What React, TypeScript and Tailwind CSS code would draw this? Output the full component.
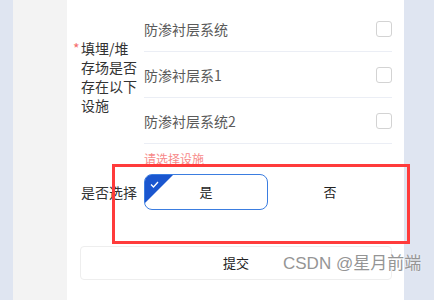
import React from "react";

const font = { fontFamily: '"Noto Sans CJK SC", "Noto Sans", sans-serif' };

function Row({ text }: { text: string }) {
  return (
    <div className="flex h-[46px] items-center justify-between border-b border-[#ebeef5]">
      <span className="pt-[2px] text-[14px] text-[#5a5a5a]">{text}</span>
      <span className="h-[16px] w-[16px] rounded-[3px] border border-[#d3d3d3] bg-white" />
    </div>
  );
}

export default function App() {
  return (
    <div className="relative flex h-[300px] w-[434px] overflow-hidden" style={font}>
      <div className="w-[13px] bg-[#dfe5f1]" />
      <div className="w-[54px] bg-[#f3f3f3]" />
      <div className="flex w-[337px] flex-col bg-white pl-[6px] pr-[12px] pt-[6px]">
        <div className="flex items-center">
          <div className="flex w-[71px] pt-[4px] text-[14px] leading-[19px] text-[#333]">
            <span className="w-[8px] text-[#f56c6c]">*</span>
            <span className="w-[57px] break-all">填埋/堆存场是否存在以下设施</span>
          </div>
          <div className="flex w-[248px] flex-col">
            <Row text="防渗衬层系统" />
            <Row text="防渗衬层系1" />
            <Row text="防渗衬层系统2" />
          </div>
        </div>
        <div className="ml-[71px] mt-[7px] h-[16px] text-[12px] leading-[16px] text-[#f78989]">请选择设施</div>
        <div className="mt-[7px] flex items-center">
          <div className="w-[71px] pl-[8px] text-[14px] text-[#333]">是否选择</div>
          <div className="flex w-[248px]">
            <div className="relative flex h-[36px] w-[124px] items-center justify-center overflow-hidden rounded-[8px] border border-[#3b7de0] text-[13px] text-[#222]">
              <div className="absolute left-0 top-0 h-0 w-0 border-[14px] border-l-[#1a56cf] border-t-[#1a56cf] border-r-transparent border-b-transparent" />
              <svg className="absolute left-[5px] top-[6px]" width="9" height="7" viewBox="0 0 9 7">
                <path d="M1 3.5 L3.5 6 L8 1" stroke="white" strokeWidth="1.3" fill="none" />
              </svg>
              是
            </div>
            <div className="flex h-[36px] w-[124px] items-center justify-center text-[13px] text-[#222]">否</div>
          </div>
        </div>
        <div className="ml-[7px] mt-[36px] flex h-[34px] w-[312px] items-center justify-center rounded-[4px] border border-[#eeeeee] text-[13px] text-[#222]">
          提交
        </div>
      </div>
      <div className="w-[30px] bg-[#dfe5f1]" />
      <div className="absolute left-[112px] top-[164px] h-[80px] w-[298px] border-[3px] border-[#ff3b3b]" />
      <div
        className="absolute left-[283px] top-[251px] text-[17px] text-[#959595]"
        style={{ fontFamily: '"Liberation Sans", "Noto Sans CJK SC", sans-serif', textShadow: "0 0 2px #fff" }}
      >
        CSDN @星月前端
      </div>
    </div>
  );
}
